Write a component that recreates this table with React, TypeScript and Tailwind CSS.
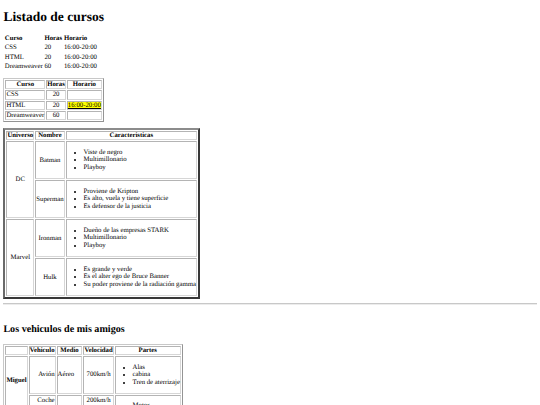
const td = "border border-t-[#b4b4b4] border-l-[#b4b4b4] border-b-[#d6d6d6] border-r-[#d6d6d6] p-0 leading-[7.2px]";
const th = td + " font-bold text-center";
const ul = "list-disc my-[6.6px] pl-[16.875px] text-left leading-[7.6px]";

function List({ items }: { items: string[] }) {
  return (
    <ul className={ul}>
      {items.map((i) => (
        <li key={i}>{i}</li>
      ))}
    </ul>
  );
}

const cursos = [
  ["CSS", "20", "16:00-20:00"],
  ["HTML", "20", "16:00-20:00"],
  ["Dreamweaver", "60", "16:00-20:00"],
];

export default function App() {
  return (
    <div className="min-h-screen bg-white px-[3.375px] text-[6.75px] leading-[7.6px] text-black font-['Liberation_Serif',serif] [text-rendering:geometricPrecision]">
      <h1 className="my-[9.045px] text-[13.5px] leading-[15.6px] font-bold">Listado de cursos</h1>

      <table className="border-separate border-spacing-[1px]">
        <tbody>
          <tr>
            <td className="p-[0.42px] font-bold">Curso</td>
            <td className="p-[0.42px] font-bold">Horas</td>
            <td className="p-[0.42px] font-bold">Horario</td>
          </tr>
          {cursos.map((c) => (
            <tr key={c[0]}>
              {c.map((v, i) => (
                <td key={i} className="p-[0.42px]">{v}</td>
              ))}
            </tr>
          ))}
        </tbody>
      </table>

      <table className="mt-[6px] border-separate border-spacing-[1px] border border-t-[#c8c8c8] border-l-[#c8c8c8] border-b-[#949494] border-r-[#949494]">
        <tbody>
          <tr>
            <th className={th}>Curso</th>
            <th className={th}>Horas</th>
            <th className={th}>Horario</th>
          </tr>
          <tr>
            <td className={td}>CSS</td>
            <td className={td + " text-center"}>20</td>
            <td className={td}></td>
          </tr>
          <tr>
            <td className={td}>HTML</td>
            <td className={td + " text-center"}>20</td>
            <td className={td}>
              <span className="bg-[#ffff00] underline">16:00-20:00</span>
            </td>
          </tr>
          <tr>
            <td className={td}>Dreamweaver</td>
            <td className={td + " text-center"}>60</td>
            <td className={td}></td>
          </tr>
        </tbody>
      </table>

      <table className="mt-[6px] border-separate border-spacing-[1px] border-2 border-t-[#8c8c8c] border-l-[#6a6a6a] border-b-[#383838] border-r-[#383838]">
        <tbody>
          <tr>
            <th className={th}>Universo</th>
            <th className={th}>Nombre</th>
            <th className={th}>Caracteristicas</th>
          </tr>
          <tr>
            <td rowSpan={2} className={td + " text-center"}>DC</td>
            <td className={td + " text-center"}>Batman</td>
            <td className={td}>
              <List items={["Viste de negro", "Multimillonario", "Playboy"]} />
            </td>
          </tr>
          <tr>
            <td className={td + " text-center"}>Superman</td>
            <td className={td}>
              <List items={["Proviene de Kripton", "Es alto, vuela y tiene superficie", "Es defensor de la justicia"]} />
            </td>
          </tr>
          <tr>
            <td rowSpan={2} className={td + " text-center"}>Marvel</td>
            <td className={td + " text-center"}>Ironman</td>
            <td className={td}>
              <List items={["Dueño de las empresas STARK", "Multimillonario", "Playboy"]} />
            </td>
          </tr>
          <tr>
            <td className={td + " text-center"}>Hulk</td>
            <td className={td}>
              <List items={["Es grande y verde", "Es el alter ego de Bruce Banner", "Su poder proviene de la radiación gamma"]} />
            </td>
          </tr>
        </tbody>
      </table>

      <hr className="my-[3.375px] border-t border-t-[#c8c8c8] border-b border-b-[#ececec]" />
      <br />

      <h2 className="my-[8.4px] text-[10.125px] leading-[11.4px] font-bold">Los vehiculos de mis amigos</h2>

      <table className="border-separate border-spacing-[1px] border border-t-[#c8c8c8] border-l-[#c8c8c8] border-b-[#949494] border-r-[#949494]">
        <tbody>
          <tr>
            <th className={th}></th>
            <th className={th}>Vehiculo</th>
            <th className={th}>Medio</th>
            <th className={th}>Velocidad</th>
            <th className={th}>Partes</th>
          </tr>
          <tr>
            <th rowSpan={2} className={th}>Miguel</th>
            <td className={td + " text-right"}>Avión</td>
            <td className={td}>Aéreo</td>
            <td className={td + " text-center"}>700km/h</td>
            <td className={td}>
              <List items={["Alas", "cabina", "Tren de aterrizaje"]} />
            </td>
          </tr>
          <tr>
            <td className={td + " h-[11px] text-right"}>Coche</td>
            <td rowSpan={2} className={td}>Terrestre</td>
            <td className={td + " text-center"}>200km/h</td>
            <td rowSpan={2} className={td}>
              <List items={["Motor", "Ruedas", "Volante"]} />
            </td>
          </tr>
          <tr>
            <th className={th}>Ana</th>
            <td className={td + " text-right"}>Moto</td>
            <td className={td + " text-center"}>180km/h</td>
          </tr>
        </tbody>
      </table>
    </div>
  );
}
